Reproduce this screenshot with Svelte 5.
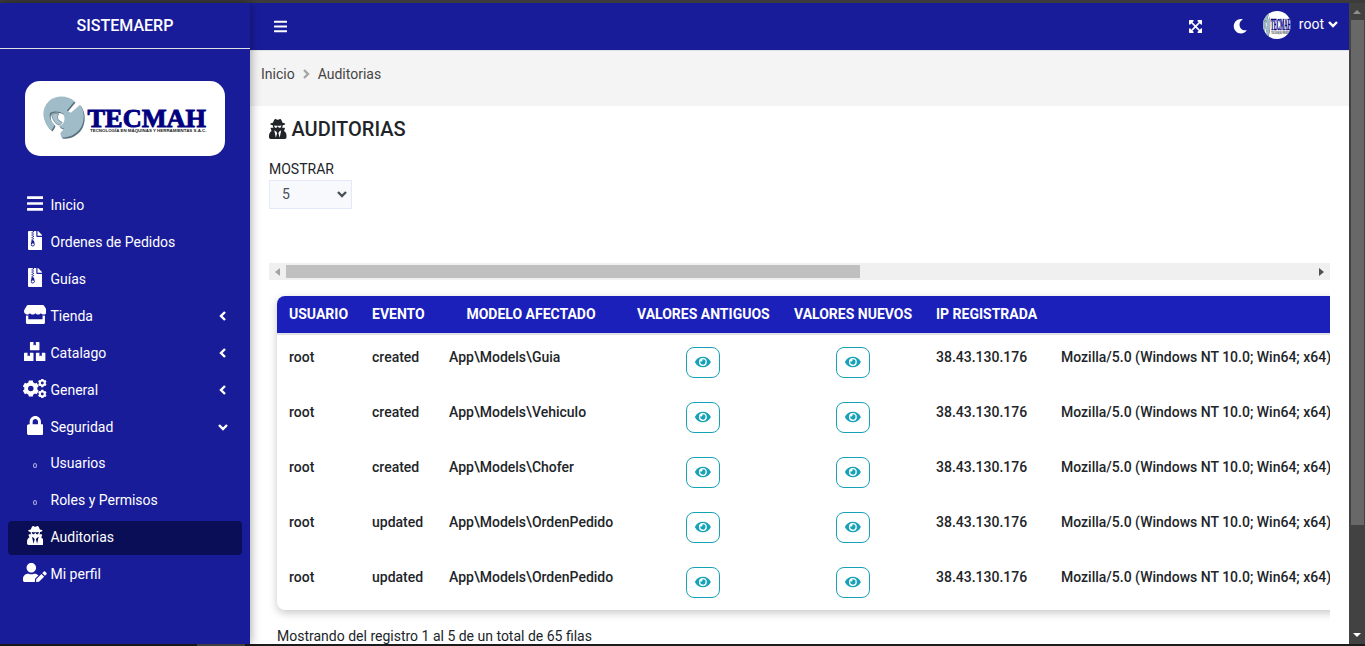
<script>
  const icons = {
    bars: [448, 'M16 132h416c8.8 0 16-7.2 16-16V76c0-8.800-7.200-16-16-16H16C7.200 60 0 67.200 0 76v40c0 8.800 7.200 16 16 16zm0 160h416c8.800 0 16-7.200 16-16v-40c0-8.800-7.200-16-16-16H16c-8.800 0-16 7.200-16 16v40c0 8.800 7.200 16 16 16zm0 160h416c8.800 0 16-7.200 16-16v-40c0-8.800-7.200-16-16-16H16c-8.800 0-16 7.200-16 16v40c0 8.800 7.200 16 16 16z'],
    archive: [384, 'M377 105L279.1 7c-4.5-4.5-10.6-7-17-7H256v128h128v-6.1c0-6.3-2.5-12.4-7-16.900zM128.400 336c-17.900 0-32.400 12.100-32.400 27 0 15 14.600 27 32.500 27s32.400-12.100 32.400-27-14.600-27-32.500-27zM224 136V0h-63.600v32h-32V0H24C10.700 0 0 10.700 0 24v464c0 13.300 10.700 24 24 24h336c13.300 0 24-10.700 24-24V160H248c-13.200 0-24-10.800-24-24zM95.900 32h32v32h-32V32zm32.300 384c-33.200 0-58-30.400-51.400-62.900L96.400 256v-32h32v-32h-32v-32h32v-32h-32V96h32V64h32v32h-32v32h32v32h-32v32h32v32h-32v32h22.100c5.700 0 10.700 4.100 11.800 9.700l17.300 87.700c6.400 32.400-18.400 62.600-51.400 62.600z'],
    store: [616, 'M602 118.6L537.1 15C531.3 5.7 521 0 510 0H106C95 0 84.7 5.7 78.9 15L14 118.6c-33.5 53.5-3.8 127.9 58.8 136.4 4.5.6 9.1.9 13.7.9 29.6 0 55.8-13 73.8-33.1 18 20.1 44.3 33.1 73.8 33.1 29.6 0 55.8-13 73.8-33.1 18 20.1 44.3 33.1 73.8 33.1 29.6 0 55.8-13 73.8-33.1 18.1 20.1 44.3 33.1 73.8 33.1 4.7 0 9.2-.3 13.7-.9 62.8-8.4 92.6-82.8 59-136.4zM529.5 288c-10 0-19.900-1.500-29.500-3.800V384H116v-99.800c-9.600 2.200-19.500 3.800-29.500 3.800-6 0-12.100-.4-18-1.200-5.600-.8-11.100-2.100-16.400-3.600V480c0 17.700 14.300 32 32 32h448c17.700 0 32-14.300 32-32V283.200c-5.400 1.600-10.800 2.900-16.400 3.600-6.100.8-12.100 1.200-18.200 1.200z'],
    boxes: [576, 'M560 288h-80v96l-32-21.3-32 21.3v-96h-80c-8.8 0-16 7.2-16 16v192c0 8.8 7.2 16 16 16h224c8.8 0 16-7.2 16-16V304c0-8.8-7.2-16-16-16zm-384-64h224c8.8 0 16-7.2 16-16V16c0-8.8-7.2-16-16-16h-80v96l-32-21.3L256 96V0h-80c-8.8 0-16 7.2-16 16v192c0 8.8 7.2 16 16 16zm64 64h-80v96l-32-21.3L96 384v-96H16c-8.8 0-16 7.2-16 16v192c0 8.8 7.2 16 16 16h224c8.8 0 16-7.2 16-16V304c0-8.8-7.2-16-16-16z'],
    cogs: [640, gear(210, 256, 222, 178, 6, 74) + gear(520, 108, 118, 94, 6, 38) + gear(520, 404, 118, 94, 6, 38)],
    lock: [448, 'M400 224h-24v-72C376 68.2 307.8 0 224 0S72 68.2 72 152v72H48c-26.5 0-48 21.5-48 48v192c0 26.5 21.5 48 48 48h352c26.5 0 48-21.5 48-48V272c0-26.5-21.5-48-48-48zm-104 0H152v-72c0-39.7 32.3-72 72-72s72 32.3 72 72v72z'],
    secret: [448, 'M383.9 308.3l23.9-62.6c4-10.5-3.7-21.7-15-21.7h-58.5c11-18.9 17.8-40.6 17.8-64v-.3c39.2-7.8 64-19.1 64-31.7 0-13.3-27.3-25.1-70.1-33-9.2-32.8-27-65.8-40.6-82.8-9.5-11.9-25.9-15.6-39.5-8.8l-27.6 13.8c-9 4.5-19.6 4.5-28.6 0L182.1 3.4c-13.6-6.8-30-3.1-39.5 8.8-13.5 17-31.4 50-40.6 82.8-42.7 7.9-70 19.7-70 33 0 12.6 24.8 23.9 64 31.7v.3c0 23.4 6.8 45.1 17.8 64H56.3c-11.5 0-19.2 11.7-14.7 22.3l25.8 60.2C27.3 329.8 0 372.7 0 422.4v44.8C0 491.9 20.1 512 44.8 512h358.4c24.7 0 44.8-20.1 44.8-44.8v-44.8c0-48.4-25.8-90.4-64.1-114.1zM176 480l-41.6-192 49.6 32 24 40-32 120zm96 0l-32-120 24-40 49.6-32L272 480zm41.7-298.5c-3.900 11.900-7 24.600-16.500 33.400-10.100 9.300-48 22.400-64-25-2.800-8.400-15.400-8.400-18.300 0-17 50.200-56 32.400-64 25-9.500-8.800-12.700-21.500-16.500-33.400-.8-2.500-6.300-5.700-6.300-5.800v-10.800c28.300 3.600 61 5.800 96 5.800s67.700-2.100 96-5.800v10.800c-.1.1-5.600 3.200-6.400 5.800z'],
    edit: [640, 'M224 256c70.7 0 128-57.3 128-128S294.7 0 224 0 96 57.3 96 128s57.3 128 128 128zm89.6 32h-16.7c-22.2 10.2-46.9 16-72.9 16s-50.6-5.8-72.9-16h-16.7C60.2 288 0 348.2 0 422.4V464c0 26.5 21.5 48 48 48h274.9c-2.4-6.8-3.4-14-2.6-21.3l6.8-60.9 1.2-11.1 7.9-7.9 77.3-77.3c-24.5-27.7-60-45.5-99.9-45.5zm45.3 145.3l-6.8 61c-1.1 10.2 7.5 18.8 17.6 17.6l60.9-6.8 137.9-137.9-71.7-71.7-137.9 137.8zM633 268.9L595.1 231c-9.3-9.3-24.5-9.3-33.8 0l-37.8 37.8-4.1 4.1 71.8 71.7 41.8-41.8c9.3-9.4 9.3-24.5 0-33.9z'],
    moon: [512, 'M283.2 512c79 0 151.1-35.9 198.9-94.800 7.100-8.700-.6-21.400-11.600-19.300-124.200 23.600-238.300-71.600-238.300-197 0-72.200 38.700-138.600 101.500-174.400 9.700-5.500 7.300-20.200-3.700-22.200A258.200 258.200 0 0 0 283.200 0c-141.300 0-256 114.500-256 256 0 141.300 114.500 256 256 256z'],
    expand: [448, 'M448 344v112a23.940 23.940 0 0 1-24 24H312c-21.390 0-32.090-25.900-17-41l36.200-36.200L224 295.600 116.770 402.900 153 439c15.090 15.100 4.390 41-17 41H24a23.940 23.940 0 0 1-24-24V344c0-21.400 25.890-32.100 41-17l36.190 36.200L184.460 256 77.180 148.700 41 185c-15.100 15.100-41 4.400-41-17V56a23.940 23.940 0 0 1 24-24h112c21.390 0 32.090 25.900 17 41l-36.200 36.200L224 216.400l107.230-107.300L295 73c-15.090-15.100-4.390-41 17-41h112a23.940 23.940 0 0 1 24 24v112c0 21.400-25.890 32.100-41 17l-36.190-36.200L263.540 256l107.280 107.300L407 327.100c15.100-15.200 41-4.500 41 16.900z'],
    eye: [576, 'M572.52 241.4C518.29 135.59 410.93 64 288 64S57.68 135.64 3.48 241.41a32.35 32.35 0 0 0 0 29.19C57.71 376.41 165.07 448 288 448s230.32-71.64 284.52-177.41a32.35 32.35 0 0 0 0-29.19zM288 400a144 144 0 1 1 144-144 143.93 143.93 0 0 1-144 144zm0-240a95.31 95.31 0 0 0-25.31 3.79 47.85 47.85 0 0 1-66.9 66.9A95.78 95.78 0 1 0 288 160z']
  };

  function gear(cx, cy, outer, inner, teeth, hole) {
    const step = (Math.PI * 2) / teeth;
    const pts = [];
    for (let i = 0; i < teeth; i++) {
      const mid = i * step - Math.PI / 2;
      for (const [offset, r] of [[-0.34, inner], [-0.24, outer], [0.24, outer], [0.34, inner]]) {
        const a = mid + offset * step;
        pts.push(`${(cx + r * Math.cos(a)).toFixed(1)} ${(cy + r * Math.sin(a)).toFixed(1)}`);
      }
    }
    return `M${pts.join('L')}ZM${cx - hole} ${cy}a${hole} ${hole} 0 1 0 ${hole * 2} 0a${hole} ${hole} 0 1 0 ${-hole * 2} 0Z`;
  }

  const wrench =
    'M105 20C82 1 48 2 28 20C4 42 6 82 36 107L42 98L45 91C33 80 28 68 32 55C44 49 60 49 71 58C77 68 76 80 70 88L58 96L74 103L62 116L66 128C90 132 112 118 124 100C136 80 136 52 122 31L94 55L82 48Z';

  const menu = [
    { label: 'Inicio', icon: 'bars' },
    { label: 'Ordenes de Pedidos', icon: 'archive' },
    { label: 'Guías', icon: 'archive' },
    { label: 'Tienda', icon: 'store', arrow: 'left' },
    { label: 'Catalago', icon: 'boxes', arrow: 'left' },
    { label: 'General', icon: 'cogs', arrow: 'left' },
    { label: 'Seguridad', icon: 'lock', arrow: 'down' },
    { label: 'Usuarios', sub: true },
    { label: 'Roles y Permisos', sub: true },
    { label: 'Auditorias', icon: 'secret', active: true },
    { label: 'Mi perfil', icon: 'edit' }
  ];

  const headers = ['USUARIO', 'EVENTO', 'MODELO AFECTADO', 'VALORES ANTIGUOS', 'VALORES NUEVOS', 'IP REGISTRADA'];
  const rows = [
    ['created', 'Guia'],
    ['created', 'Vehiculo'],
    ['created', 'Chofer'],
    ['updated', 'OrdenPedido'],
    ['updated', 'OrdenPedido']
  ];
  const agent = 'Mozilla/5.0 (Windows NT 10.0; Win64; x64)';
</script>

{#snippet icon(name, size)}
  <svg class="icon" width={(size * icons[name][0]) / 512} height={size} viewBox="0 0 {icons[name][0]} 512">
    <path fill="currentColor" fill-rule="evenodd" d={icons[name][1]} />
  </svg>
{/snippet}

{#snippet chevron(dir)}
  <svg class="icon" width="10" height="10" viewBox="0 0 10 10">
    <path
      fill="none"
      stroke="currentColor"
      stroke-width="2.4"
      d={dir === 'left' ? 'M7 1L3 5L7 9' : dir === 'right' ? 'M3 1L7 5L3 9' : 'M1 3L5 7L9 3'}
    />
  </svg>
{/snippet}

{#snippet brand()}
  <g transform="translate(14.500 13.500) scale(0.3333)">
    <path d={wrench} fill="#56707b" transform="translate(3 4)" />
    <path d={wrench} fill="#9fbcc8" />
    <path d="M36 60Q46 54 58 58Q50 66 56 76L68 84L60 92Q42 88 36 60Z" fill="#a9c3ce" stroke="#5b727c" stroke-width="2" />
  </g>
  <text class="brand-name" x="62.500" y="45.800" textLength="118.500" lengthAdjust="spacingAndGlyphs">TECMAH</text>
  <text class="brand-tag" x="65" y="50.800" textLength="116.500" lengthAdjust="spacingAndGlyphs">TECNOLOGÍA EN MÁQUINAS Y HERRAMIENTAS S.A.C.</text>
{/snippet}

<div class="screen">
  <div class="strip top"></div>
  <div class="app">
    <aside>
      <div class="title">SISTEMAERP</div>
      <svg class="logo" width="200" height="75" viewBox="0 0 200 75">{@render brand()}</svg>
      <nav>
        {#each menu as item, i}
          <a class:active={item.active} class:raised={i > 6}>
            <span class="slot">
              {#if item.sub}<i class="dot"></i>{:else}{@render icon(item.icon, 19)}{/if}
            </span>
            <span class="label">{item.label}</span>
            {#if item.arrow}{@render chevron(item.arrow)}{/if}
          </a>
        {/each}
      </nav>
    </aside>
    <main>
      <header>
        {@render icon('bars', 15)}
        <span class="grow"></span>
        <span class="expand">{@render icon('expand', 15)}</span>
        <span class="moon">{@render icon('moon', 14.4)}</span>
        <svg class="avatar" width="28" height="28" viewBox="0 0 28 28">
          <g transform="translate(-3 -10.500) scale(0.172 0.650)">{@render brand()}</g>
        </svg>
        <span class="user">root {@render chevron('down')}</span>
      </header>
      <div class="crumbs">
        <span>Inicio</span>
        <span class="sep">{@render chevron('right')}</span>
        <span>Auditorias</span>
      </div>
      <section>
        <h1>{@render icon('secret', 20)}<span>AUDITORIAS</span></h1>
        <div class="show">MOSTRAR</div>
        <div class="select"><span>5</span>{@render chevron('down')}</div>
        <div class="scroller">
          <div class="hbar">
            <i class="tri left"></i>
            <div class="thumb"></div>
            <i class="tri right"></i>
          </div>
          <div class="pad">
            <div class="table">
              <div class="row head">
                {#each headers as h}<div>{h}</div>{/each}
                <div></div>
              </div>
              {#each rows as [event, model]}
                <div class="row">
                  <div>root</div>
                  <div>{event}</div>
                  <div>App\Models\{model}</div>
                  <div class="center"><button>{@render icon('eye', 14)}</button></div>
                  <div class="center"><button>{@render icon('eye', 14)}</button></div>
                  <div>38.43.130.176</div>
                  <div>{agent}</div>
                </div>
              {/each}
            </div>
            <div class="summary">Mostrando del registro 1 al 5 de un total de 65 filas</div>
          </div>
        </div>
      </section>
    </main>
    <div class="vbar">
      <i class="tri up"></i>
      <div class="vthumb"></div>
      <i class="tri down"></i>
    </div>
  </div>
  <div class="strip bottom"><i></i></div>
</div>

<style>
  :global(body) { margin: 0; overflow: hidden; }
  .screen {
    width: 1365px; height: 646px; display: flex; flex-direction: column; overflow: hidden;
    font: 14px/22px Roboto, sans-serif; color: #212529; background: #fff;
  }
  .screen * { box-sizing: border-box; }
  .icon { display: block; flex: none; }
  .strip { flex: none; }
  .top { height: 3px; background: #3c3c3c; }
  .bottom { height: 2px; background: #1b1b1b; padding-left: 197px; }
  .bottom i { display: block; width: 48px; height: 2px; background: #4b4b4b; }
  .app { flex: 1; min-height: 0; display: flex; }
  aside {
    width: 250px; flex: none; background: #191c99; color: #fff; z-index: 2;
    box-shadow: 0 0 10px rgba(0, 0, 0, 0.4);
  }
  .title {
    height: 46px; border-bottom: 1px solid #dee2e6; text-align: center;
    font-size: 16px; font-weight: 500; line-height: 45px;
  }
  .logo { display: block; margin: 32px 25px 32px; background: #fff; border-radius: 15px; }
  .brand-name { font: bold 25.500px "Liberation Serif", serif; fill: #000080; stroke: #000080; stroke-width: 0.9px; }
  .brand-tag { font: bold 4.200px "Liberation Sans", sans-serif; fill: #222; }
  nav { display: flex; flex-direction: column; gap: 3px; padding: 0 8px; }
  nav a { display: flex; height: 34px; align-items: center; padding: 0 14px 0 13px; border-radius: 4px; }
  nav a.active { background: #090e57; }
  .slot { width: 28px; display: flex; justify-content: center; padding-bottom: 3px; margin-right: 1.500px; }
  .label { flex: 1; }
  .raised .label { padding-bottom: 2px; }
  .raised .slot { padding-bottom: 5px; }
  .dot { width: 4px; height: 5px; border: 1px solid #b4b5e6; border-radius: 50%; margin-top: 8px; }
  main { flex: 1; min-width: 0; overflow: hidden; display: flex; flex-direction: column; }
  header {
    height: 48px; flex: none; background: #191c99; border-bottom: 1px solid #dee2e6;
    color: #fff; display: flex; align-items: center; padding: 0 11px 0 24px;
  }
  .grow { flex: 1; }
  .expand { margin-right: 31px; }
  .moon { margin-right: 15px; }
  .avatar { border-radius: 50%; background: #fff; margin: 0 8px 3px 0; overflow: hidden; }
  .user { display: flex; align-items: center; gap: 4px; padding-bottom: 6px; }
  .crumbs {
    height: 55px; flex: none; background: #f4f4f4; display: flex; align-items: flex-start;
    padding: 12px 11px; color: #444;
  }
  .sep { color: #a5a5a5; padding: 6px 7px 0 6px; }
  section { padding: 0 19px; }
  h1 {
    margin: 12px 0 0; height: 22px; display: flex; align-items: center; gap: 5px;
    font-size: 20px; font-weight: 500;
  }
  h1 .icon { margin-bottom: 1px; }
  .show { margin-top: 18px; height: 22px; line-height: 23px; }
  .select {
    width: 83px; height: 29px; border: 1px solid #e3e9fb; background: #f8f9fc; color: #495057;
    display: flex; align-items: center; justify-content: space-between; padding: 0 4px 0 12px;
  }
  .select span { padding-bottom: 2px; }
  .select .icon { margin-bottom: 1px; }
  .scroller { margin-top: 54px; overflow: hidden; height: 381px; }
  .hbar { height: 17px; background: #f0f0f0; display: flex; align-items: center; padding: 0 6px; }
  .thumb { width: 574px; height: 13px; background: #c0c0c0; margin: 0 auto 0 6px; }
  .tri { border: 4px solid transparent; width: 0; height: 0; }
  .tri.left { border-left: 0; border-right: 5px solid #a3a3a3; }
  .tri.right { border-right: 0; border-left: 5px solid #505050; }
  .tri.up { border-top: 0; border-bottom: 4px solid #8f8f8f; }
  .tri.down { border-bottom: 0; border-top: 4px solid #fff; }
  .pad { padding: 16px 8px; width: 1500px; }
  .table { border-radius: 8px; overflow: hidden; box-shadow: 0 3px 8px rgba(0, 0, 0, 0.22); background: #fff; }
  .row {
    display: grid; grid-template-columns: 83px 77px 188px 157px 142px 125px 1fr;
    height: 55px; padding: 12px 0; font-weight: 500; white-space: nowrap; line-height: 21px;
  }
  .row > div { padding-left: 12px; }
  .row > .center { padding: 0; display: flex; justify-content: center; }
  .row > .center:nth-child(4) { padding-right: 1px; }
  .head {
    height: 39px; padding: 8px 0; background: #1b20ba; color: #fff; font-weight: 700;
    border-bottom: 2px solid #dee2e6;
  }
  .head > div:nth-child(3) { text-align: center; padding: 0; }
  button {
    width: 34px; height: 31px; border: 1px solid #17a2b8; border-radius: 8px; background: #fff;
    color: #17a2b8; padding: 0 0 1px; display: flex; align-items: center; justify-content: center;
  }
  .summary { margin-top: 15px; }
  .vbar { width: 16px; flex: none; background: #424242; display: flex; flex-direction: column; align-items: center; padding: 7px 0; }
  .vthumb { width: 13px; height: 505px; background: #686868; margin: 6px 0 auto; }
</style>
